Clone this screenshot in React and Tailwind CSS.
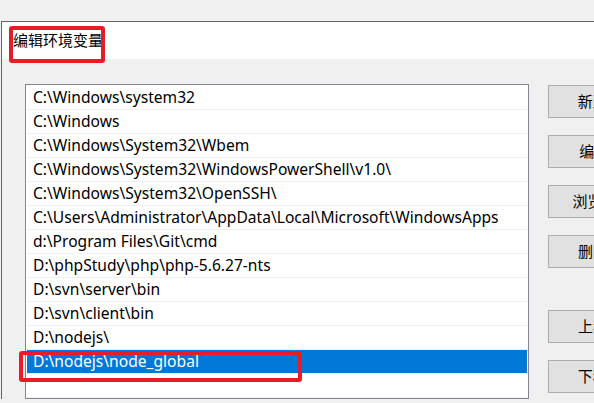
import React from 'react';

const paths = [
  'C:\\Windows\\system32',
  'C:\\Windows',
  'C:\\Windows\\System32\\Wbem',
  'C:\\Windows\\System32\\WindowsPowerShell\\v1.0\\',
  'C:\\Windows\\System32\\OpenSSH\\',
  'C:\\Users\\Administrator\\AppData\\Local\\Microsoft\\WindowsApps',
  'd:\\Program Files\\Git\\cmd',
  'D:\\phpStudy\\php\\php-5.6.27-nts',
  'D:\\svn\\server\\bin',
  'D:\\svn\\client\\bin',
  'D:\\nodejs\\',
  'D:\\nodejs\\node_global',
  '',
];

const SELECTED = 11;

function Button({ label }) {
  return (
    <div className="w-[110px] h-[33px] shrink-0 flex items-center justify-center bg-[#e1e1e1] border border-[#adadad] text-[15px] text-black">
      {label}
    </div>
  );
}

export default function App() {
  return (
    <div
      className="relative w-[594px] h-[403px] overflow-hidden bg-[#f0f0f0] text-black"
      style={{ fontFamily: '"Noto Sans", "Noto Sans CJK SC", sans-serif' }}
    >
      {/* strip above the dialog */}
      <div className="h-[21px] bg-[#f0f0f0]" />

      <div className="flex">
        {/* bit of window behind */}
        <div className="w-px shrink-0 bg-[#f0f0f0]" />

        {/* dialog */}
        <div className="flex-1 border-l border-t border-[#646464]">
          {/* title bar */}
          <div className="h-[37px] bg-white pl-[11px] pt-[9px] text-[15px] leading-[18px]">
            编辑环境变量
          </div>

          {/* body */}
          <div className="flex pt-[25px] pl-[23px] bg-[#f0f0f0]">
            {/* list box */}
            <div className="w-[504px] shrink-0 border border-[#828790] bg-white pt-px px-px">
              {paths.map((p, i) => (
                <div
                  key={i}
                  className={
                    i === SELECTED
                      ? 'h-[24px] border-b border-[#f0f0f0] bg-[#0078d7] text-white pl-[6px] text-[15.6px] leading-[23px] whitespace-nowrap'
                      : 'h-[24px] border-b border-[#f0f0f0] pl-[6px] text-[15.6px] leading-[23px] whitespace-nowrap'
                  }
                >
                  {p}
                </div>
              ))}
            </div>

            {/* buttons */}
            <div className="flex flex-col ml-[19px] pt-px">
              <Button label="新建(N)" />
              <div className="h-[17px]" />
              <Button label="编辑(E)" />
              <div className="h-[17px]" />
              <Button label="浏览(B)..." />
              <div className="h-[17px]" />
              <Button label="删除(D)" />
              <div className="h-[42px]" />
              <Button label="上移(U)" />
              <div className="h-[17px]" />
              <Button label="下移(O)" />
            </div>
          </div>
        </div>
      </div>

      {/* red annotation boxes */}
      <div className="absolute left-[9px] top-[26px] w-[96px] h-[37px] border-4 border-[#e81c24] rounded-[3px]" />
      <div className="absolute left-[19px] top-[351px] w-[283px] h-[31px] border-4 border-[#e81c24] rounded-[3px]" />
    </div>
  );
}
